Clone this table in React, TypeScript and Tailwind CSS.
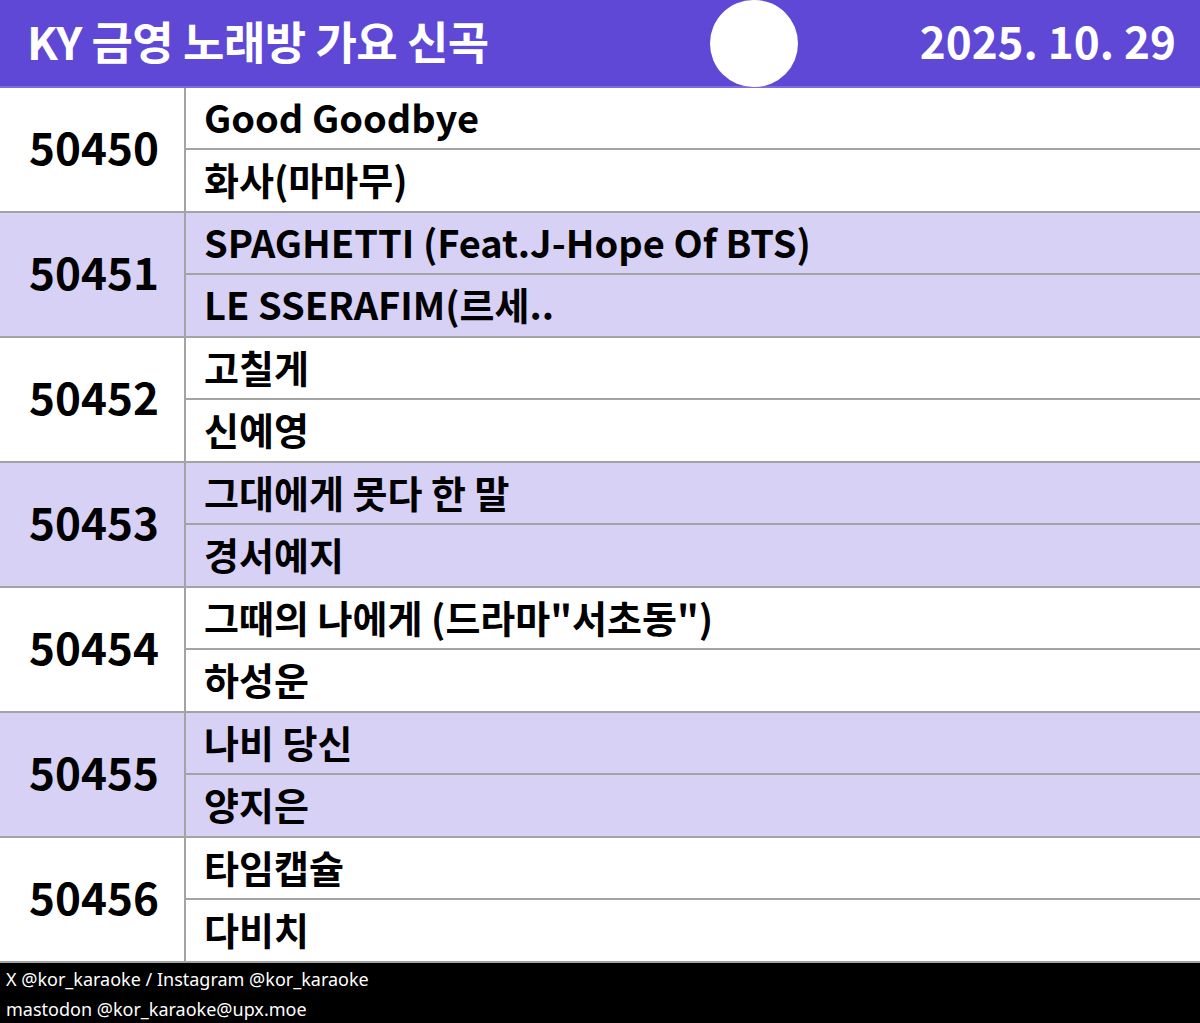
const songs = [
  { no: '50450', title: 'Good Goodbye', artist: '화사(마마무)' },
  { no: '50451', title: 'SPAGHETTI (Feat.J-Hope Of BTS)', artist: 'LE SSERAFIM(르세..' },
  { no: '50452', title: '고칠게', artist: '신예영' },
  { no: '50453', title: '그대에게 못다 한 말', artist: '경서예지' },
  { no: '50454', title: '그때의 나에게 (드라마"서초동")', artist: '하성운' },
  { no: '50455', title: '나비 당신', artist: '양지은' },
  { no: '50456', title: '타임캡슐', artist: '다비치' },
]

const font = { fontFamily: '"Noto Sans CJK KR", "Noto Sans", sans-serif' }

export default function App() {
  return (
    <div className="w-[1200px] h-[1023px] overflow-hidden bg-white" style={font}>
      <header className="relative flex h-[88px] items-center justify-between bg-[#5f48d6] pl-[27px] pr-[24px] border-b-2 border-[#7d6be0]">
        <h1 className="text-[45px] font-bold text-white tracking-[-0.5px] leading-none -mt-[6px]">KY 금영 노래방 가요 신곡</h1>
        <div className="absolute left-[710px] top-0 h-[87px] w-[88px] rounded-full bg-white" />
        <span className="text-[44px] font-bold text-white leading-none -mt-[6px]">2025. 10. 29</span>
      </header>
      <div className="flex flex-col">
        {songs.map((s, i) => (
          <div
            key={s.no}
            className={`flex h-[125px] border-b-2 border-[#a3a3a3] ${i % 2 === 1 ? 'bg-[#d6d1f5]' : 'bg-white'}`}
          >
            <div className="flex w-[186px] shrink-0 items-center justify-center border-r-2 border-[#a3a3a3] pl-[4px] pb-[8px] text-[44px] font-bold text-black">
              {s.no}
            </div>
            <div className="flex flex-1 flex-col">
              <div className="flex h-[62px] items-center border-b-2 border-[#a3a3a3] pl-[18px] pb-[4px] text-[38px] font-bold text-black">
                {s.title}
              </div>
              <div className="flex flex-1 items-center pl-[18px] pb-[4px] text-[38px] font-bold text-black">{s.artist}</div>
            </div>
          </div>
        ))}
      </div>
      <footer
        className="flex h-[62px] flex-col justify-center bg-black pl-[6px] text-[18px] leading-[30px] text-white"
        style={{ fontFamily: '"Noto Sans", "Noto Sans CJK KR", sans-serif' }}
      >
        <div>X @kor_karaoke / Instagram @kor_karaoke</div>
        <div>mastodon @kor_karaoke@upx.moe</div>
      </footer>
    </div>
  )
}
